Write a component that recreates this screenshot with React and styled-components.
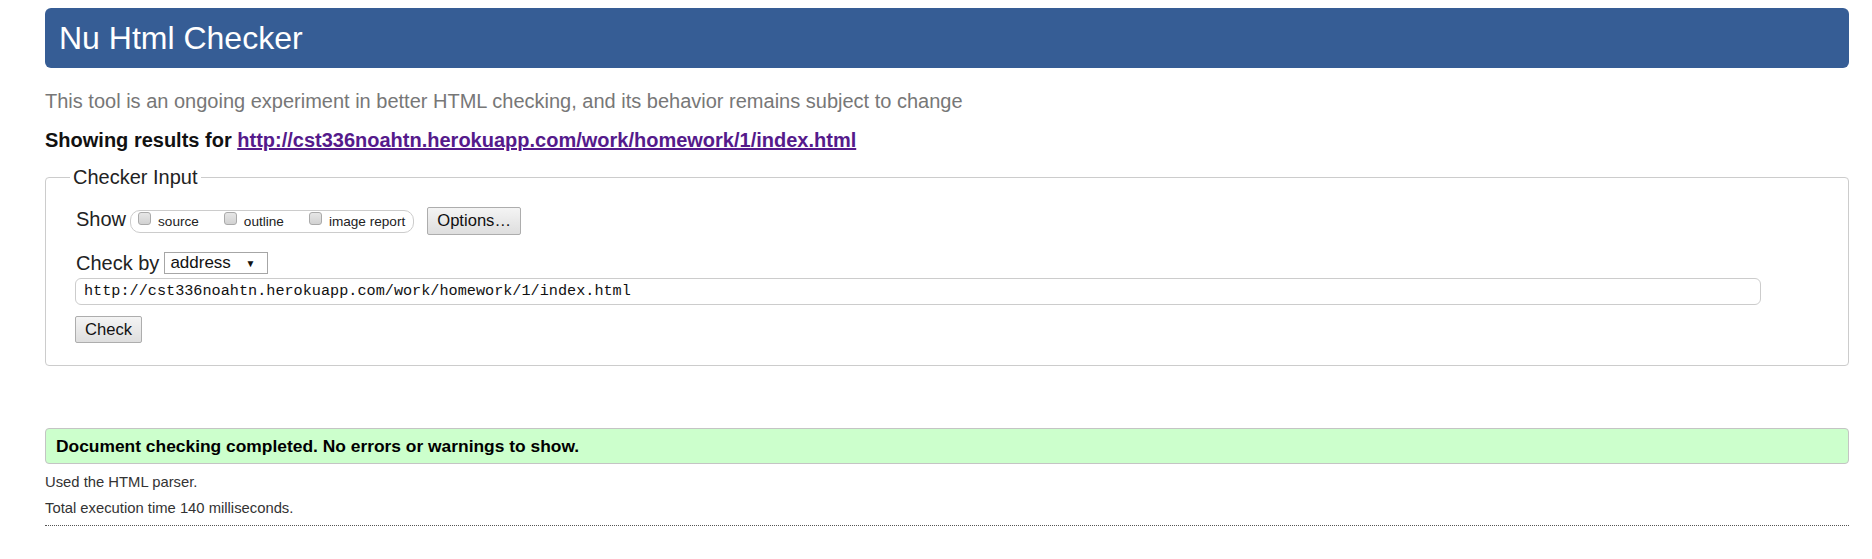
import styled, { createGlobalStyle } from "styled-components";

const GlobalStyle = createGlobalStyle`
  html, body {
    margin: 0;
    padding: 0;
    background: #fff;
  }
  body {
    font-family: "Liberation Sans", Arial, sans-serif;
    color: #222;
  }
`;

const Page = styled.div`
  padding: 8px 23px 0 45px;
`;

const Banner = styled.h1`
  margin: 0;
  height: 60px;
  line-height: 60px;
  padding-left: 14px;
  background: #365d95;
  color: #fff;
  font-size: 32px;
  font-weight: normal;
  border-radius: 6px;
`;

const Intro = styled.p`
  margin: 22px 0 0;
  font-size: 20px;
  line-height: 23px;
  color: #777;
`;

const Showing = styled.p`
  margin: 16px 0 0;
  font-size: 20px;
  line-height: 22px;
  font-weight: bold;
  color: #111;

  a {
    color: #551a8b;
  }
`;

const Fieldset = styled.fieldset`
  margin: 15px 0 0;
  padding: 18px 0 22px 30px;
  border: 1px solid #ccc;
  border-radius: 4px;
  min-width: 0;
`;

const Legend = styled.legend`
  margin-left: -6px;
  padding: 0 3px;
  font-size: 20px;
  line-height: 23px;
  color: #222;
`;

const Row = styled.div`
  display: flex;
  align-items: center;
  height: ${(p) => p.$h}px;
  margin-top: ${(p) => p.$top || 0}px;
`;

const Label = styled.span`
  font-size: 20px;
  line-height: 23px;
  color: #222;
  margin-bottom: ${(p) => p.$lift || 0}px;
`;

const ShowGroup = styled.div`
  display: flex;
  align-items: flex-start;
  gap: 25px;
  height: 21px;
  margin-left: 4px;
  padding: 0 8px 0 7px;
  border: 1px solid #ccc;
  border-radius: 10px;
`;

const Option = styled.span`
  display: flex;
  align-items: flex-start;
  gap: 7px;
  font-size: 13.6px;
  line-height: 16px;
  padding-top: 3px;
  color: #222;
`;

const Box = styled.span`
  display: inline-block;
  width: 11px;
  height: 11px;
  margin-top: -2px;
  border: 1px solid #aaa;
  border-radius: 3px;
  background: linear-gradient(#e6e6e6, #d2d2d2);
`;

const Button = styled.button`
  height: ${(p) => p.$h || 28}px;
  padding: 0 ${(p) => p.$pad || 9}px;
  margin-left: ${(p) => p.$left || 0}px;
  font-family: "Liberation Sans", Arial, sans-serif;
  font-size: 16.6px;
  color: #111;
  background: linear-gradient(#f4f4f4, #dedede);
  border: 1px solid #adadad;
  border-radius: 2px;
`;

const Select = styled.div`
  display: flex;
  align-items: center;
  justify-content: space-between;
  width: 104px;
  height: 22px;
  box-sizing: border-box;
  margin-left: 5px;
  padding: 0 12px 0 5px;
  border: 1px solid #a6a6a6;
  font-size: 17px;
  color: #111;
  background: #fff;

  span:last-child {
    font-size: 10px;
  }
`;

const UrlInput = styled.div`
  box-sizing: border-box;
  width: 1686px;
  height: 27px;
  margin: 4px 0 0 -1px;
  padding-left: 8px;
  border: 1px solid #ccc;
  border-radius: 6px;
  font-family: "Liberation Mono", "DejaVu Sans Mono", monospace;
  font-size: 15.2px;
  line-height: 25px;
  color: #111;
`;

const Result = styled.div`
  margin-top: 62px;
  height: 34px;
  line-height: 34px;
  padding-left: 10px;
  background: #ccffcc;
  border: 1px solid #c4c4c4;
  border-radius: 4px;
  font-size: 17.4px;
  font-weight: bold;
  color: #000;
`;

const Note = styled.p`
  margin: ${(p) => p.$top}px 0 0;
  font-size: 14.8px;
  line-height: 20px;
  color: #333;
`;

const Rule = styled.hr`
  margin: 7px 0 0;
  border: 0;
  border-top: 1px dotted #555;
`;

export default function App() {
  return (
    <>
      <GlobalStyle />
      <Page>
        <Banner>Nu Html Checker</Banner>
        <Intro>
          This tool is an ongoing experiment in better HTML checking, and its
          behavior remains subject to change
        </Intro>
        <Showing>
          Showing results for{" "}
          <a href="#">http://cst336noahtn.herokuapp.com/work/homework/1/index.html</a>
        </Showing>
        <Fieldset>
          <Legend>Checker Input</Legend>
          <Row $h={28}>
            <Label $lift={4}>Show</Label>
            <ShowGroup>
              <Option>
                <Box />
                source
              </Option>
              <Option>
                <Box />
                outline
              </Option>
              <Option>
                <Box />
                image report
              </Option>
            </ShowGroup>
            <Button $left={13}>Options…</Button>
          </Row>
          <Row $h={22} $top={17}>
            <Label>Check by</Label>
            <Select>
              <span>address</span>
              <span>▼</span>
            </Select>
          </Row>
          <UrlInput>http://cst336noahtn.herokuapp.com/work/homework/1/index.html</UrlInput>
          <Row $h={27} $top={11}>
            <Button $h={27} $pad={9} $left={-1}>
              Check
            </Button>
          </Row>
        </Fieldset>
        <Result>Document checking completed. No errors or warnings to show.</Result>
        <Note $top={8}>Used the HTML parser.</Note>
        <Note $top={6}>Total execution time 140 milliseconds.</Note>
        <Rule />
      </Page>
    </>
  );
}
